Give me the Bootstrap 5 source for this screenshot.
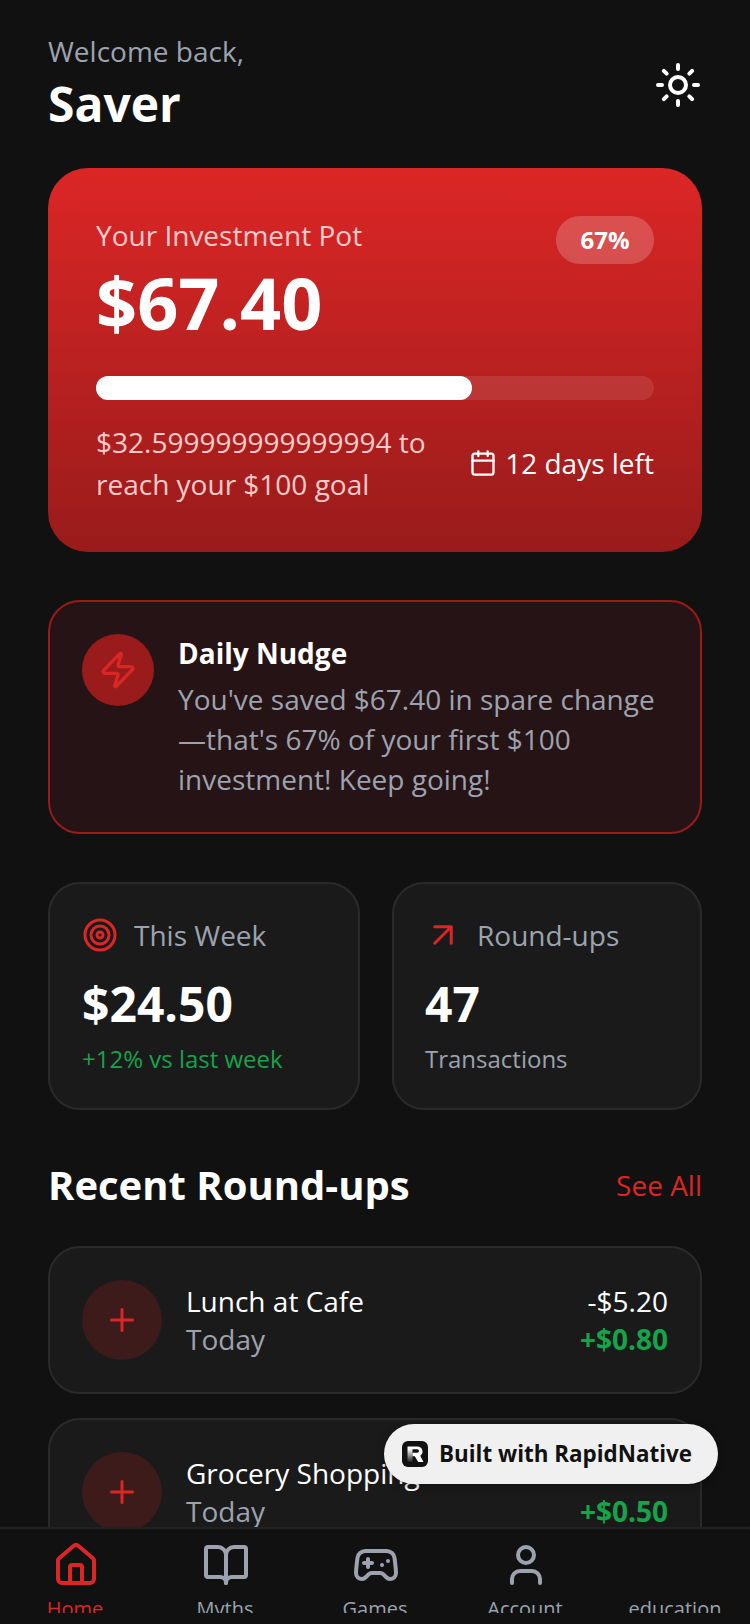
<!DOCTYPE html>
<html lang="en">
<head>
<meta charset="UTF-8">
<title>Saver Home</title>
<link href="https://cdn.jsdelivr.net/npm/bootstrap@5.3.3/dist/css/bootstrap.min.css" rel="stylesheet">
<style>
  html, body { height: 100%; }
  body { background: #111111; color: #fff; font-family: "Open Sans", "Liberation Sans", sans-serif; overflow: hidden; }
  .app-shell { height: 1624px; }
  .app-scroll { padding: 33px 48px 0; min-height: 0; }
  .welcome-text { font-size: 28px; line-height: 36px; color: #9ca3af; }
  .user-name { font-size: 48px; line-height: 64px; font-weight: 700; margin-top: 3px; }
  .pot-card { margin-top: 32px; height: 384px; border-radius: 40px; padding: 48px; background: linear-gradient(180deg, #dc2626, #991b1b); }
  .pot-label { font-size: 28px; line-height: 36px; color: #fecaca; margin-top: 1px; }
  .pot-amount { font-size: 72px; line-height: 84px; font-weight: 700; margin-top: 7px; }
  .pot-badge { width: 98px; height: 48px; border-radius: 24px; background: rgba(255,255,255,.2); font-size: 24px; font-weight: 700; }
  .pot-track { height: 24px; border-radius: 12px; background: rgba(255,255,255,.1); margin-top: 32px; }
  .pot-fill { height: 100%; border-radius: 12px; background: #fff; }
  .pot-foot { margin-top: 21px; }
  .pot-left { font-size: 28px; line-height: 42px; color: #fecaca; width: 350px; }
  .pot-days { font-size: 28px; line-height: 40px; }
  .nudge-box { margin-top: 48px; height: 234px; border: 2px solid #991b1b; border-radius: 32px; background: #261315; padding: 31px 32px 32px; gap: 24px; }
  .nudge-icon { width: 72px; height: 72px; border-radius: 50%; background: #991b1b; flex-shrink: 0; margin-top: 1px; }
  .nudge-title { font-size: 28px; line-height: 40px; font-weight: 700; }
  .nudge-text { font-size: 28px; line-height: 40px; color: #9ca3af; margin-top: 6px; }
  .stat-row { margin-top: 48px; gap: 32px; }
  .stat-box { flex: 1 1 0; height: 228px; border: 2px solid #2a2a2a; border-radius: 32px; background: #1a1a1a; padding: 31px 32px 32px; }
  .stat-box:first-child { flex: 0 0 312px; }
  .stat-box:last-child { padding-left: 31px; }
  .stat-label { font-size: 28px; line-height: 40px; color: #9ca3af; gap: 16px; }
  .stat-value { font-size: 48px; line-height: 64px; font-weight: 700; margin-top: 17px; }
  .stat-note { font-size: 24px; line-height: 32px; color: #9ca3af; margin-top: 7px; }
  .stat-up { color: #16a34a; }
  .section-head { margin-top: 43px; height: 64px; }
  .section-title { font-size: 40px; line-height: 56px; font-weight: 700; margin: 0; }
  .see-all { font-size: 28px; color: #dc2626; text-decoration: none; }
  .trx-list { margin-top: 29px; gap: 24px; }
  .trx-item { height: 148px; flex-shrink: 0; border: 2px solid #2a2a2a; border-radius: 32px; background: #1a1a1a; padding: 0 32px; gap: 24px; }
  .trx-icon { width: 80px; height: 80px; border-radius: 50%; background: #3d1b1b; flex-shrink: 0; }
  .trx-name { font-size: 28px; line-height: 38px; }
  .trx-date { font-size: 28px; line-height: 38px; color: #9ca3af; }
  .trx-spent { font-size: 28px; line-height: 38px; }
  .trx-spent-up { line-height: 34px; margin-bottom: 4px; }
  .trx-save { font-size: 28px; line-height: 38px; font-weight: 700; color: #16a34a; }
  .tab-bar { height: 97px; flex-shrink: 0; background: #111111; border-top: 2px solid #222222; position: relative; z-index: 2; overflow: hidden; }
  .tab-clip { height: 84px; overflow: hidden; }
  .tab-item { flex: 1 1 0; padding-top: 8px; font-size: 20px; line-height: 30px; color: #9ca3af; min-width: 0; }
  .tab-item svg { display: block; height: 56px; margin-left: calc(50% - 23px); margin-bottom: 1px; }
  .tab-active { color: #dc2626; }
  .built-pill { position: absolute; left: 384px; top: 1424px; width: 334px; height: 60px; padding-left: 18px; border-radius: 30px; background: #f0f0f0; color: #111; font-size: 22.4px; font-weight: 700; gap: 11px; z-index: 3; box-shadow: 0 2px 8px rgba(0,0,0,.3); }
  .built-logo { width: 26px; height: 26px; flex-shrink: 0; }
</style>
</head>
<body>
<div class="app-shell d-flex flex-column">
  <div class="app-scroll flex-grow-1 overflow-hidden">
    <div class="d-flex justify-content-between align-items-center">
      <div>
        <div class="welcome-text">Welcome back,</div>
        <div class="user-name">Saver</div>
      </div>
      <svg width="48" height="48" viewBox="0 0 24 24" fill="none" stroke="#fff" stroke-width="2" stroke-linecap="round" stroke-linejoin="round"><circle cx="12" cy="12" r="4"/><path d="M12 2v2M12 20v2M4.93 4.93l1.41 1.41M17.66 17.66l1.41 1.41M2 12h2M20 12h2M6.34 17.66l-1.41 1.41M19.07 4.93l-1.41 1.41"/></svg>
    </div>

    <div class="pot-card">
      <div class="d-flex justify-content-between align-items-start">
        <div>
          <div class="pot-label">Your Investment Pot</div>
          <div class="pot-amount">$67.40</div>
        </div>
        <div class="pot-badge d-flex align-items-center justify-content-center">67%</div>
      </div>
      <div class="pot-track"><div class="pot-fill" style="width: 67.4%"></div></div>
      <div class="pot-foot d-flex justify-content-between align-items-center">
        <div class="pot-left">$32.599999999999994 to reach your $100 goal</div>
        <div class="pot-days d-flex align-items-center gap-2">
          <svg width="28" height="28" viewBox="0 0 24 24" fill="none" stroke="#fff" stroke-width="2" stroke-linecap="round" stroke-linejoin="round"><path d="M8 2v4M16 2v4"/><rect x="3" y="4" width="18" height="18" rx="2"/><path d="M3 10h18"/></svg>
          <span>12 days left</span>
        </div>
      </div>
    </div>

    <div class="nudge-box d-flex">
      <div class="nudge-icon d-flex align-items-center justify-content-center">
        <svg width="40" height="40" viewBox="0 0 24 24" fill="none" stroke="#dc2626" stroke-width="2" stroke-linecap="round" stroke-linejoin="round"><path d="M4 14a1 1 0 0 1-.78-1.63l9.9-10.2a.5.5 0 0 1 .86.46l-1.92 6.02A1 1 0 0 0 13 10h7a1 1 0 0 1 .78 1.63l-9.9 10.2a.5.5 0 0 1-.86-.46l1.92-6.02A1 1 0 0 0 11 14z"/></svg>
      </div>
      <div>
        <div class="nudge-title">Daily Nudge</div>
        <div class="nudge-text">You've saved $67.40 in spare change —that's 67% of your first $100 investment! Keep going!</div>
      </div>
    </div>

    <div class="stat-row d-flex">
      <div class="stat-box">
        <div class="stat-label d-flex align-items-center">
          <svg width="36" height="36" viewBox="0 0 24 24" fill="none" stroke="#dc2626" stroke-width="2" stroke-linecap="round" stroke-linejoin="round"><circle cx="12" cy="12" r="10"/><circle cx="12" cy="12" r="6"/><circle cx="12" cy="12" r="2"/></svg>
          <span>This Week</span>
        </div>
        <div class="stat-value">$24.50</div>
        <div class="stat-note stat-up">+12% vs last week</div>
      </div>
      <div class="stat-box">
        <div class="stat-label d-flex align-items-center">
          <svg width="36" height="36" viewBox="0 0 24 24" fill="none" stroke="#dc2626" stroke-width="2" stroke-linecap="round" stroke-linejoin="round"><path d="M6.500 6.500h11v11M6.500 17.500l11-11"/></svg>
          <span>Round-ups</span>
        </div>
        <div class="stat-value">47</div>
        <div class="stat-note">Transactions</div>
      </div>
    </div>

    <div class="section-head d-flex justify-content-between align-items-center">
      <h2 class="section-title">Recent Round-ups</h2>
      <a class="see-all" href="#">See All</a>
    </div>

    <div class="trx-list d-flex flex-column">
      <div class="trx-item d-flex align-items-center">
        <div class="trx-icon d-flex align-items-center justify-content-center">
          <svg width="36" height="36" viewBox="0 0 24 24" fill="none" stroke="#dc2626" stroke-width="2" stroke-linecap="round"><path d="M5 12h14M12 5v14"/></svg>
        </div>
        <div class="flex-grow-1">
          <div class="trx-name">Lunch at Cafe</div>
          <div class="trx-date">Today</div>
        </div>
        <div class="text-end">
          <div class="trx-spent">-$5.20</div>
          <div class="trx-save">+$0.80</div>
        </div>
      </div>
      <div class="trx-item d-flex align-items-center">
        <div class="trx-icon d-flex align-items-center justify-content-center">
          <svg width="36" height="36" viewBox="0 0 24 24" fill="none" stroke="#dc2626" stroke-width="2" stroke-linecap="round"><path d="M5 12h14M12 5v14"/></svg>
        </div>
        <div class="flex-grow-1">
          <div class="trx-name">Grocery Shopping</div>
          <div class="trx-date">Today</div>
        </div>
        <div class="text-end">
          <div class="trx-spent trx-spent-up">-$12.50</div>
          <div class="trx-save">+$0.50</div>
        </div>
      </div>
    </div>
  </div>

  <div class="tab-bar">
    <div class="tab-clip d-flex text-center">
      <div class="tab-item tab-active">
        <svg width="48" height="56" viewBox="0 0 24 24" fill="none" stroke="#dc2626" stroke-width="2" stroke-linecap="round" stroke-linejoin="round"><path d="M15 21v-8a1 1 0 0 0-1-1h-4a1 1 0 0 0-1 1v8"/><path d="M3 10a2 2 0 0 1 .709-1.528l7-5.999a2 2 0 0 1 2.582 0l7 5.999A2 2 0 0 1 21 10v9a2 2 0 0 1-2 2H5a2 2 0 0 1-2-2z"/></svg>
        Home
      </div>
      <div class="tab-item">
        <svg width="48" height="56" viewBox="0 0 24 24" fill="none" stroke="#9ca3af" stroke-width="2" stroke-linecap="round" stroke-linejoin="round"><path d="M12 7v14"/><path d="M3 18a1 1 0 0 1-1-1V4a1 1 0 0 1 1-1h5a4 4 0 0 1 4 4 4 4 0 0 1 4-4h5a1 1 0 0 1 1 1v13a1 1 0 0 1-1 1h-6a3 3 0 0 0-3 3 3 3 0 0 0-3-3z"/></svg>
        Myths
      </div>
      <div class="tab-item">
        <svg width="48" height="56" viewBox="0 0 24 24" fill="none" stroke="#9ca3af" stroke-width="2" stroke-linecap="round" stroke-linejoin="round"><path d="M6 11h4M8 9v4M15 12h.01M18 10h.01"/><path d="M17.32 5H6.68a4 4 0 0 0-3.978 3.59c-.006.052-.01.101-.017.152C2.604 9.416 2 14.456 2 16a3 3 0 0 0 3 3c1 0 1.5-.5 2-1l1.414-1.414A2 2 0 0 1 9.828 16h4.344a2 2 0 0 1 1.414.586L17 18c.5.5 1 1 2 1a3 3 0 0 0 3-3c0-1.545-.604-6.584-.685-7.258-.007-.05-.011-.1-.017-.151A4 4 0 0 0 17.32 5z"/></svg>
        Games
      </div>
      <div class="tab-item">
        <svg width="48" height="56" viewBox="0 0 24 24" fill="none" stroke="#9ca3af" stroke-width="2" stroke-linecap="round" stroke-linejoin="round"><path d="M19 21v-2a4 4 0 0 0-4-4H9a4 4 0 0 0-4 4v2"/><circle cx="12" cy="7" r="4"/></svg>
        Account
      </div>
      <div class="tab-item">
        <svg width="48" height="56" viewBox="0 0 24 24"></svg>
        education
      </div>
    </div>
  </div>
</div>

<div class="built-pill d-flex align-items-center">
  <svg class="built-logo" viewBox="0 0 26 26">
    <defs><linearGradient id="logoFade" x1="0" y1="0" x2="0" y2="1"><stop offset="0" stop-color="#fff"/><stop offset="1" stop-color="#222"/></linearGradient></defs>
    <rect width="26" height="26" rx="6" fill="#111"/>
    <path d="M5.500 8h5v13h-5z" fill="url(#logoFade)"/>
    <path d="M5.500 5.500h10a5 5 0 0 1 2.700 9.200L21.500 21h-5.300l-3.400-5.800H10.500v-3.500h4.800a1.700 1.700 0 0 0 0-3.400H5.500z" fill="#fff"/>
  </svg>
  <span>Built with RapidNative</span>
</div>
</body>
</html>
